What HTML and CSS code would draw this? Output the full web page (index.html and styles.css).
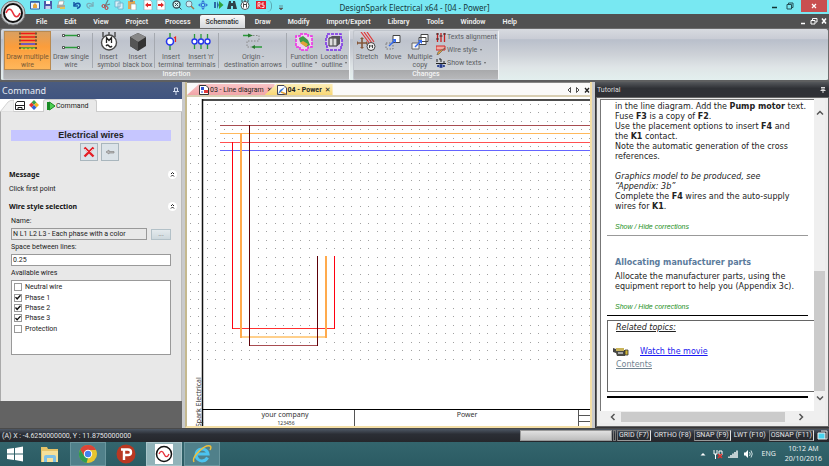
FILE: index.html
```html
<!DOCTYPE html>
<html lang="en">
<head>
<meta charset="utf-8">
<title>DesignSpark Electrical x64 - [04 - Power]</title>
<link rel="stylesheet" href="styles.css">
</head>
<body>
<button class="app-orb" aria-label="Application menu">
  <svg viewBox="0 0 26 26"><circle cx="13" cy="13" r="12" fill="#c9cdd0" stroke="#777" /><circle cx="13" cy="13" r="9" fill="#fff" stroke="#111" stroke-width="2"/><path d="M6 13c2-5 5-5 7 0s5 5 7 0" fill="none" stroke="#e8323c" stroke-width="1.6"/></svg>
</button>

<header class="titlebar">
  <div class="quick">
    <div class="quick-group">
      <button aria-label="Home"><svg viewBox="0 0 10 10"><path d="M.5 1.500h9v7.500h-9z" fill="#e8f2fb" stroke="#2d62a8"/><path d="M1 2h8" stroke="#2d62a8" stroke-width="1.500"/><path d="M3 8V5l2-2 2 2v3z" fill="#e3a53c"/></svg></button>
      <button aria-label="Save"><svg viewBox="0 0 10 10"><path d="M1 1h8v8H1z" fill="#4d57a8"/><path d="M3 1h4v3H3z" fill="#fff"/><path d="M2.500 6h5v3h-5z" fill="#cfd5ee"/></svg></button>
      <button aria-label="Print"><svg viewBox="0 0 10 10"><path d="M3 1h5l-1 4H2z" fill="#fff" stroke="#8a8a8a" stroke-width=".6"/><path d="M1 5h8v3H1z" fill="#a7a7a0"/><path d="M4 7h5v2H4z" fill="#e0c35a"/></svg></button>
    </div>
    <div class="quick-group">
      <button aria-label="Undo"><svg viewBox="0 0 10 10"><path d="M2 2v4h4" fill="none" stroke="#1759a6" stroke-width="1.500"/><path d="M2 6c2-4 7-3 6 0-.4 1.500-1.500 2-3 2.500" fill="none" stroke="#1759a6" stroke-width="1.600"/></svg></button>
      <button aria-label="Redo"><svg viewBox="0 0 10 10"><path d="M8 2v4H4" fill="none" stroke="#79adb8" stroke-width="1.300"/><path d="M8 6C6 2 1 3 2 6c.4 1.500 1.500 2 3 2.500" fill="none" stroke="#79adb8" stroke-width="1.300"/></svg></button>
    </div>
    <div class="quick-group">
      <button aria-label="Cut"><svg viewBox="0 0 10 10"><path d="M7 0L4 6M9 4L3 6" stroke="#6b7d80" stroke-width="1.200"/><circle cx="2.500" cy="6" r="1.500" fill="none" stroke="#c43636"/><circle cx="5.500" cy="8" r="1.500" fill="none" stroke="#c43636"/></svg></button>
      <button aria-label="Copy"><svg viewBox="0 0 10 10"><path d="M1 1h5v6H1zM4 3h5v6H4z" fill="#d9f1f8" stroke="#6ba9c6" stroke-width=".8"/></svg></button>
      <button aria-label="Paste"><svg viewBox="0 0 10 10"><path d="M1 1h7v8H1z" fill="#e5a74f"/><path d="M3 0h3v2H3z" fill="#7b7b7b"/><path d="M4 4h5v6H4z" fill="#fff" stroke="#999" stroke-width=".6"/></svg></button>
    </div>
    <div class="quick-group">
      <button aria-label="Previous page"><svg viewBox="0 0 10 10"><path d="M1 0h6l2 2v8H1z" fill="#fff" stroke="#8b97a1" stroke-width=".6"/><path d="M2 5l3-2.500v1.500h3v2H5v1.500z" fill="#e02828"/></svg></button>
      <button aria-label="Next page"><svg viewBox="0 0 10 10"><path d="M1 0h6l2 2v8H1z" fill="#fff" stroke="#8b97a1" stroke-width=".6"/><path d="M8 5L5 2.500v1.500H2v2h3v1.500z" fill="#e02828"/></svg></button>
    </div>
    <div class="quick-group">
      <button aria-label="Zoom all"><svg viewBox="0 0 10 10"><circle cx="4.500" cy="4.500" r="3.500" fill="#d9f4f5" stroke="#354b55" stroke-width="1.300"/><path d="M7 7l2.500 2.500M3 3l3 3M6 3L3 6" stroke="#354b55"/></svg></button>
      <button aria-label="Zoom"><svg viewBox="0 0 10 10"><circle cx="4" cy="4" r="3" fill="#cfeef5" stroke="#698393"/><path d="M6 6l3 3" stroke="#a4744c" stroke-width="1.500"/></svg></button>
      <button aria-label="Pan"><svg viewBox="0 0 10 10"><path d="M5 0l2 2.500H3zM5 10l2-2.500H3zM0 5l2.500-2v4zM10 5L7.500 3v4z" fill="#3576d6"/><path d="M3.500 3.500h3v3h-3z" fill="none" stroke="#3576d6"/></svg></button>
    </div>
    <div class="quick-group">
      <button aria-label="Run"><svg viewBox="0 0 10 10"><path d="M0 2h2v6H0z" fill="#2c6ca6"/><path d="M3 1l2 4-2 4z" fill="#2c6ca6"/><path d="M5 1l4.500 4L5 9z" fill="#2fa33a"/></svg></button>
      <button aria-label="Find"><svg viewBox="0 0 10 10"><path d="M2 1h2v2h2V1h2l2 8H6V6H4v3H0z" fill="#2e4248"/></svg></button>
      <button aria-label="Symbols"><svg viewBox="0 0 10 10"><circle cx="5" cy="5.500" r="4" fill="#fff" stroke="#4b5559"/><path d="M2 0v2M5 0v2M8 0v2M3.500 7.500v-4L5 5l1.500-1.500v4" fill="none" stroke="#333" stroke-width=".9"/></svg></button>
    </div>
    <div class="quick-group">
      <button aria-label="RS Components"><svg viewBox="0 0 10 10"><path d="M0 1h10v8H0z" fill="#e4202c"/><path d="M2 7.500v-5h2v2.500H2.500L4.500 7.500M8 3H6v2h2v2.500H5.500" fill="none" stroke="#fff" stroke-width=".8"/></svg></button>
    </div>
    <span class="quick-end"></span>
    <button class="quick-more" aria-label="Customize toolbar"><svg viewBox="0 0 6 6"><path d="M1 1h4M1 3h4L3 5z" fill="#555" stroke="#555" stroke-width=".6"/></svg></button>
  </div>
  <h1>DesignSpark Electrical x64 - [04 - Power]</h1>
  <div class="window-controls">
    <button aria-label="Minimize"><svg viewBox="0 0 8 8"><path d="M1 5.500h5" stroke="#133" stroke-width="1.500"/></svg></button>
    <button aria-label="Restore"><svg viewBox="0 0 8 8"><path d="M1 2.500h4.500V7H1zM2.500 2.500V1H7v4.500H5.500" fill="none" stroke="#244f56"/></svg></button>
    <button class="close" aria-label="Close"><svg viewBox="0 0 8 8"><path d="M2 2l4 4M6 2L2 6" stroke="#fff" stroke-width="1.200"/></svg></button>
  </div>
</header>

<nav class="menubar">
  <a href="#">File</a><a href="#">Edit</a><a href="#">View</a><a href="#">Project</a><a href="#">Process</a><a href="#" class="current">Schematic</a><a href="#">Draw</a><a href="#">Modify</a><a href="#">Import/Export</a><a href="#">Library</a><a href="#">Tools</a><a href="#">Window</a><a href="#">Help</a>
  <div class="mdi">
    <button aria-label="Minimize drawing"><svg viewBox="0 0 8 8"><path d="M1 6.500h4" stroke="#fff" stroke-width="1.500"/></svg></button>
    <button aria-label="Restore drawing"><svg viewBox="0 0 8 8"><path d="M1 3.500h4V7H1zM2.500 3V1.500H7V5H5.500" fill="none" stroke="#fff"/></svg></button>
    <button aria-label="Close drawing"><svg viewBox="0 0 8 8"><path d="M2 1.500l4 5M6 1.500l-4 5" stroke="#fff" stroke-width="1.500"/></svg></button>
  </div>
</nav>

<section class="ribbon" aria-label="Schematic">
  <div class="group">
    <div class="tools insertion">
      <button class="tool active"><svg viewBox="0 0 20 20"><path d="M3 1.500h15M3 5h15M3 8.500h15" stroke="#f01818" stroke-width="1.400"/><path d="M3 12h15" stroke="#3b3bf0" stroke-width="1.400"/><path d="M3 16h15" stroke="#269b2b" stroke-width="1.400"/><path d="M3 17h15" stroke="#f3e52c" stroke-dasharray="2 2"/><path d="M1 .5h2v2H1zM17 .5h2v2h-2zM1 4h2v2H1zM17 4h2v2h-2zM1 7.500h2v2H1zM17 7.500h2v2h-2zM1 11h2v2H1zM17 11h2v2h-2zM1 15h2v2H1zM17 15h2v2h-2z" fill="#753"/></svg><span>Draw multiple<br>wire</span></button>
      <button class="tool"><svg viewBox="0 0 20 20"><path d="M3 3.500h14M3 15.500h14" stroke="#2a9a3a" stroke-width="1.400"/><path d="M1.500 2.500h2v2h-2zM16.500 2.500h2v2h-2zM1.500 14.500h2v2h-2zM16.500 14.500h2v2h-2z" fill="#fff" stroke="#333" stroke-width=".8"/></svg><span>Draw single<br>wire</span></button>
      <i class="sep"></i>
      <button class="tool"><svg viewBox="0 0 20 20"><path d="M4 0v5M10 0v4M16 0v5" stroke="#333" stroke-width="1.200"/><circle cx="10" cy="10.500" r="7.500" fill="#fff" stroke="#4a4a4a" stroke-width="1.400"/><path d="M7.500 11V5.500L10 8.500l2.500-3V11M7 14q1.500-2 3 0t3 0" fill="none" stroke="#222" stroke-width="1.300"/></svg><span>Insert<br>symbol</span></button>
      <button class="tool"><svg viewBox="0 0 20 20"><path d="M10 1l8 4v9l-8 5-8-5V5z" fill="#333"/><path d="M10 1l8 4-8 5-8-5z" fill="#888"/><path d="M2 5l8 5v9l-8-5z" fill="#555"/></svg><span>Insert<br>black box</span></button>
      <i class="sep"></i>
      <button class="tool"><svg viewBox="0 0 20 20"><path d="M9 1v5M9 13v5" stroke="#2a9a3a" stroke-width="1.400"/><circle cx="9" cy="9.500" r="3.500" fill="#fff" stroke="#2636ee" stroke-width="1.600"/><path d="M13 6l1.500-1v5" fill="none" stroke="#e22" stroke-width="1.200"/></svg><span>Insert<br>terminal</span></button>
      <button class="tool"><svg viewBox="0 0 20 20"><path d="M3.500 2v5M3.500 12v5M10 2v5M10 12v5M16.500 2v5M16.500 12v5" stroke="#2a9a3a" stroke-width="1.300"/><g fill="#fff" stroke="#2636ee" stroke-width="1.400"><circle cx="3.500" cy="9.500" r="2.500"/><circle cx="10" cy="9.500" r="2.500"/><circle cx="16.500" cy="9.500" r="2.500"/></g></svg><span>Insert 'n'<br>terminals</span></button>
      <i class="sep"></i>
      <button class="tool"><svg viewBox="0 0 20 20"><path d="M0 3.500h6M12 15h7" stroke="#2a9a3a" stroke-width="1.300"/><path d="M5 1.500l5 2-5 2zM8 15l4-2v4z" fill="#287a2f"/><path d="M10 3.500h6V9H4v6h4" fill="none" stroke="#888" stroke-dasharray="1.500 1.500"/></svg><span>Origin -<br>destination arrows</span></button>
      <i class="sep"></i>
      <button class="tool"><svg viewBox="0 0 20 20"><path d="M6 2h8v2h4v11h-4v3H6v-3H2V4h4z" fill="#ecd2ee" stroke="#ee28e6" stroke-width="1.500" stroke-dasharray="3 1"/><path d="M5 6l4-2 5 4 2 5-4 2-6-5z" fill="#3d9d47"/><path d="M6 11l3-2 5 3-2 3z" fill="#e2a23a"/></svg><span>Function<br>outline<b></b></span></button>
      <button class="tool"><svg viewBox="0 0 20 20"><path d="M3 2h14v4h1v8h-1v4H3v-4H2V6h1z" fill="#d9cdea" stroke="#7a2ee6" stroke-width="1.500" stroke-dasharray="3 1"/><path d="M5 6h8v8H5z" fill="#ddd" stroke="#333"/><path d="M13 6l3-2v8l-3 2zM5 6l3-2h8l-3 2z" fill="#555"/><path d="M9 6v8" stroke="#555"/></svg><span>Location<br>outline<b></b></span></button>
    </div>
    <h2>Insertion</h2>
  </div>
  <div class="group">
    <div class="tools changes">
      <button class="tool"><svg viewBox="0 0 20 20"><path d="M4 0l9 12M7 0l8 11M10 0l7 10" stroke="#e03838" stroke-width="1.200"/><path d="M5 6v10M0 11h10" stroke="#85583b" stroke-width="1.600"/><path d="M5 5l2 2H3zM5 17l2-2H3zM-1 11l2-2v4zM11 11L9 9v4z" fill="#85583b"/><circle cx="14" cy="14.500" r="4" fill="#eee" stroke="#444"/><path d="M12.500 16v-3l1.500 1.500 1.500-1.500v3" fill="none" stroke="#444"/></svg><span>Stretch</span></button>
      <button class="tool"><svg viewBox="0 0 20 20"><path d="M10 3.500h7v7h-7z" fill="#fff" stroke="#444"/><path d="M3 11h7v6H3z" fill="none" stroke="#777" stroke-dasharray="1.500 1.500"/><path d="M6 14l6-6" stroke="#3268ef" stroke-width="1.500"/><path d="M9 7h4v4z" fill="#3268ef"/></svg><span>Move</span></button>
      <button class="tool"><svg viewBox="0 0 20 20"><path d="M11 2.500h7v7h-7zM9 5.500h7v7H9z" fill="#fff" stroke="#444"/><path d="M2 11h7v6H2z" fill="#f5f5f5" stroke="#666"/><path d="M5 15l6-6" stroke="#3268ef" stroke-width="1.500"/><path d="M8 8h4v4z" fill="#3268ef"/></svg><span>Multiple<br>copy</span></button>
      <div class="stack">
        <button class="row-tool"><svg viewBox="0 0 10 10"><path d="M1.500 1v9M5 1v9M8.500 1v9" stroke="#c72020" stroke-width="1.300"/><path d="M0 2h3M3.500 4h3M7 2h3M0 7h3" stroke="#333"/></svg>Texts alignment</button>
        <button class="row-tool"><svg viewBox="0 0 10 10"><path d="M0 1h9v4H0z" fill="#f0a9a0" stroke="#d12828"/><path d="M9 3L3 9l-2 1 1-3z" fill="#e9a73c" stroke="#555" stroke-width=".6"/></svg>Wire style<b></b></button>
        <button class="row-tool"><svg viewBox="0 0 10 10"><path d="M1 1v3M3 1h2v3M7 4h2M0 5.500h10" fill="none" stroke="#222"/><path d="M1 8q4-3 8 0-4 3-8 0z" fill="#fff" stroke="#223a8c"/><circle cx="5" cy="8" r="1.300" fill="#223a8c"/></svg>Show texts<b></b></button>
      </div>
    </div>
    <h2>Changes</h2>
  </div>
</section>

<main class="workspace">
  <aside class="command">
    <header class="command-head"><h2>Command</h2><button aria-label="Pin panel"><svg viewBox="0 0 8 8"><path d="M2.500 1h3v3.500h-3zM1 4.500h6M4 4.500V8" fill="none" stroke="#d5def0"/></svg></button></header>
    <div class="command-tabs">
      <svg class="slant" viewBox="0 0 14 13"><path d="M0 13L8 3q2-2 6-2v12z" fill="#f1f1f1" stroke="#bbb" stroke-width=".6"/></svg>
      <button aria-label="Files"><svg viewBox="0 0 10 10"><path d="M.5 9.500v-6L2 1.500h7.500v8zM.5 5.500h9M3 9.500v-2h4v2" fill="#fff" stroke="#222"/></svg></button>
      <button aria-label="Components"><svg viewBox="0 0 10 10"><path d="M5 0l2.500 2.500L5 5 2.500 2.500z" fill="#3ba046"/><path d="M2.500 2.500L5 5 2.500 7.500 0 5z" fill="#e3342c"/><path d="M7.500 2.500L10 5 7.500 7.500 5 5z" fill="#f2b822"/><path d="M5 5l2.500 2.500L5 10 2.500 7.500z" fill="#2f62d8"/></svg></button>
      <button class="selected"><svg viewBox="0 0 10 10"><path d="M1 1h2v8H1z" fill="#178a24"/><path d="M3.500 1L9 5 3.500 9z" fill="#4fd052" stroke="#178a24"/></svg>Command</button>
    </div>
    <form class="command-body">
      <h3 class="banner">Electrical wires</h3>
      <div class="actions">
        <button type="button" aria-label="Cancel"><svg viewBox="0 0 12 12"><path d="M1.500 1.500l9 9M10.500 1.500l-9 9" stroke="#e41e25" stroke-width="2.400"/><path d="M2 3l3 3M10 3L7 6" stroke="#fff" stroke-width=".7"/></svg></button>
        <button type="button" aria-label="Back"><svg viewBox="0 0 12 12"><path d="M2 6l3-2v1.500h5v1.500H5V8z" fill="#bbb" stroke="#888" stroke-width=".7"/></svg></button>
      </div>
      <div class="section"><h4>Message</h4><button type="button" aria-label="Collapse message"><svg viewBox="0 0 9 9"><circle cx="4.500" cy="4.500" r="4.500" fill="#fff"/><path d="M3 4l1.500-1.500L6 4M3 6.500L4.500 5 6 6.500" fill="none" stroke="#222"/></svg></button></div>
      <p class="message">Click first point</p>
      <div class="section"><h4>Wire style selection</h4><button type="button" aria-label="Collapse wire style"><svg viewBox="0 0 9 9"><circle cx="4.500" cy="4.500" r="4.500" fill="#fff"/><path d="M3 4l1.500-1.500L6 4M3 6.500L4.500 5 6 6.500" fill="none" stroke="#222"/></svg></button></div>
      <div class="fields">
        <label for="style-name">Name:</label>
        <div class="picker"><input id="style-name" type="text" value="N L1 L2 L3 - Each phase with a color" readonly><button type="button" aria-label="Browse styles">...</button></div>
        <label for="spacing">Space between lines:</label>
        <input id="spacing" type="text" value="0.25">
        <p id="wires">Available wires</p>
        <div class="wirebox">
          <div class="wires" role="group" aria-labelledby="wires">
            <label><input type="checkbox">Neutral wire</label>
            <label><input type="checkbox" checked>Phase 1</label>
            <label><input type="checkbox" checked>Phase 2</label>
            <label><input type="checkbox" checked>Phase 3</label>
            <label><input type="checkbox">Protection</label>
          </div>
        </div>
      </div>
    </form>
  </aside>

  <section class="document">
    <div class="doc-tabs">
      <button class="doc-tab pink"><svg viewBox="0 0 10 10"><path d="M.5.5H7L9.500 3v6.500h-9z" fill="#fff" stroke="#333"/><path d="M2 2h3v3H2z" fill="#2c4fd0"/><path d="M5 5h4v3H5z" fill="#e23a3a"/><path d="M2 7h2" stroke="#2c4fd0"/></svg>03 - Line diagram<span class="x">✕</span></button>
      <button class="doc-tab yellow"><svg viewBox="0 0 10 10"><path d="M.5.5H7L9.500 3v6.500h-9z" fill="#fff" stroke="#445"/><path d="M1 9l2-4 5-3-4 5z" fill="#3c78d0"/><path d="M4 7l5 2" stroke="#e2a13a" stroke-width="1.500"/></svg>04 - Power<span class="x">✕</span></button>
      <div class="doc-nav">
        <button aria-label="Previous tab"><svg viewBox="0 0 6 8"><path d="M4.500 1.500v5L2 4z" fill="none" stroke="#222" stroke-width=".8"/></svg></button>
        <button aria-label="Next tab"><svg viewBox="0 0 6 8"><path d="M1.500 1.500v5L4 4z" fill="none" stroke="#222" stroke-width=".8"/></svg></button>
        <button aria-label="Close tab"><svg viewBox="0 0 6 8"><path d="M1 2l4 4.500M5 2L1 6.500" stroke="#222" stroke-width="1.300"/></svg></button>
      </div>
    </div>
    <svg class="sheet" aria-label="Power schematic">
      <defs><pattern id="grid" x="3" y="7" width="17" height="17" patternUnits="userSpaceOnUse"><path d="M0 0h1v1H0zM8 0h1v1H8zM0 8h1v1H0zM8 8h1v1H8z" fill="#a0a0a0"/></pattern></defs>
      <rect x="0" y="4" width="100%" height="259" fill="url(#grid)"/>
      <path d="M2000 3H16" fill="none" stroke="#111" stroke-width="1.500"/>
      <path d="M15.500 2V332" stroke="#111" stroke-width="1.500"/>
      <g stroke-width="1">
        <path d="M33 28.500H2000" stroke="#a84c50"/>
        <path d="M33 36.500H2000" stroke="#ffb95c"/>
        <path d="M33 45.500H2000" stroke="#ff5050"/>
        <path d="M33 53.500H2000" stroke="#6464ff"/>
        <path d="M45 231.500H148" stroke="#ff3030"/>
        <path d="M54 240H139" stroke="#ffd08c" stroke-width="2"/>
        <path d="M62 248.500H131" stroke="#a84c50"/>
        <path d="M45.500 45V232M147.500 159V232" stroke="#ff0010"/>
        <path d="M54 36V241M139 159V241" stroke="#ffaa4c" stroke-width="2"/>
        <path d="M62.500 28V249M130.500 159V249" stroke="#5c0008"/>
      </g>
      <path d="M15 312.500H2000" stroke="#000"/>
      <path d="M167.500 313V332M391.500 313V332M391.500 318.500H2000M391.500 324.500H2000" stroke="#555"/>
      <g class="sheet-text">
        <text x="98" y="320" text-anchor="middle">your company</text>
        <text class="tiny" x="99" y="328" text-anchor="middle">123456</text>
        <text x="280" y="320" text-anchor="middle">Power</text>
        <text transform="translate(14 330) rotate(-90)">Spark Electrical</text>
      </g>
    </svg>
  </section>

  <aside class="tutorial">
    <header class="tutorial-head"><h2>Tutorial</h2><button aria-label="Pin tutorial"><svg viewBox="0 0 8 8"><path d="M2 1.500h4M3 2v2h2V2M1.500 4.500h5M4 4.500V7" fill="none" stroke="#ddd"/></svg></button></header>
    <div class="viewer">
      <article class="page">
        <p>in the line diagram. Add the <b>Pump motor</b> text.<br>Fuse <b>F3</b> is a copy of <b>F2</b>.<br>Use the placement options to insert <b>F4</b> and<br>the <b>K1</b> contact.<br>Note the automatic generation of the cross<br>references.</p>
        <p><i>Graphics model to be produced, see<br>“Appendix: 3b”</i><br>Complete the <b>F4</b> wires and the auto-supply<br>wires for <b>K1</b>.</p>
        <a class="corrections" href="#">Show / Hide corrections</a>
        <hr>
        <h3>Allocating manufacturer parts</h3>
        <p>Allocate the manufacturer parts, using the<br>equipment report to help you (Appendix 3c).</p>
        <a class="corrections" href="#">Show / Hide corrections</a>
        <hr class="strong">
        <div class="related">
          <h4>Related topics:</h4>
          <div class="movie"><svg viewBox="0 0 16 10"><path d="M0 1l3 1v4L0 5z" fill="#444"/><path d="M2 3h10v6H4z" fill="#4a4a44"/><path d="M3 1h8v3H3z" fill="#c9b45a"/><path d="M12 3h3v5h-3z" fill="#d2b736" stroke="#333" stroke-width=".8"/><path d="M5 5h5v2H5z" fill="#aaa"/></svg><a href="#">Watch the movie</a></div>
          <a class="contents" href="#">Contents</a>
        </div>
        <hr class="heavy">
      </article>
      <div class="vscroll">
        <svg viewBox="0 0 8 8"><path d="M1 5.500l3-3 3 3" fill="none" stroke="#555" stroke-width="1.500"/></svg>
        <span></span>
        <svg viewBox="0 0 8 8"><path d="M1 2.500l3 3 3-3" fill="none" stroke="#555" stroke-width="1.500"/></svg>
      </div>
      <div class="hscroll">
        <svg viewBox="0 0 8 8"><path d="M5.500 1l-3 3 3 3" fill="none" stroke="#555" stroke-width="1.500"/></svg>
        <span></span>
        <svg viewBox="0 0 8 8"><path d="M2.500 1l3 3-3 3" fill="none" stroke="#555" stroke-width="1.500"/></svg>
      </div>
    </div>
  </aside>
</main>

<footer class="status">
  <span class="coords">(A) X : -4.6250000000, Y : 11.8750000000</span>
  <span class="progress"></span>
  <span class="notch"></span>
  <div class="modes">
    <button class="on">GRID (F7)</button><button>ORTHO (F8)</button><button class="on">SNAP (F9)</button><button>LWT (F10)</button><button class="on">OSNAP (F11)</button>
  </div>
  <svg class="layers" viewBox="0 0 11 11"><path d="M1 3h7v6H1z" fill="#48d3ee" stroke="#eee"/><path d="M4 1h6v8H8" fill="none" stroke="#ddd"/></svg>
</footer>

<nav class="taskbar">
  <button class="task" aria-label="Start"><svg viewBox="0 0 20 20"><path d="M2 5l7-1v5.500H2zM10 4l8-1.500v7h-8zM2 10.500h7V16l-7-1zM10 10.500h8v7L10 16z" fill="#fff"/></svg></button>
  <button class="task" aria-label="File Explorer"><svg viewBox="0 0 20 20"><path d="M1 3h6l1 2h10v13H1z" fill="#e7c468"/><path d="M2 7h16v11H2z" fill="#f6e09a"/><path d="M4 18v-5q0-2 2-2h8q2 0 2 2v5h-3v-4H7v4z" fill="#7ec0e6"/></svg></button>
  <button class="task open" aria-label="Chrome"><svg viewBox="0 0 20 20"><circle cx="10" cy="10" r="9" fill="#e8c52e"/><path d="M2.200 5.500A9 9 0 0 1 18 6h-8l-4 6z" fill="#dc4437"/><path d="M2.200 5.500l4 6.500L10 14l-1.500 5A9 9 0 0 1 2.200 5.500z" fill="#2f9c53"/><circle cx="10" cy="10" r="4.200" fill="#fff"/><circle cx="10" cy="10" r="3.200" fill="#4482ee"/></svg></button>
  <button class="task" aria-label="Presentation"><svg viewBox="0 0 20 20"><circle cx="10" cy="10" r="9.500" fill="#b93822"/><path d="M8 16V5M5 5.500h7q3 0 3 2.700T12 11H8" fill="none" stroke="#fff" stroke-width="2.400"/></svg></button>
  <button class="task focused" aria-label="DesignSpark"><svg viewBox="0 0 20 20"><path d="M1 0h18v20H1z" fill="#fff"/><circle cx="10" cy="10" r="7.500" fill="#fff" stroke="#111" stroke-width="1.500"/><path d="M5 10c1.500-3.500 3.500-3.500 5 0s3.500 3.500 5 0" fill="none" stroke="#e8323c" stroke-width="1.400"/></svg></button>
  <button class="task open" aria-label="Internet Explorer"><svg viewBox="0 0 20 20"><path d="M15.500 13.500A6 6 0 1 1 16 10H5" fill="none" stroke="#4cc3f0" stroke-width="3"/><path d="M2 18C-1 13 13 0 18 2c1.500.6.800 2.500 0 4" fill="none" stroke="#f0c03c" stroke-width="1.400"/></svg></button>
  <div class="tray">
    <svg class="up" viewBox="0 0 10 10"><path d="M2.500 6.500L5 4l2.500 2.500z" fill="#fff"/></svg>
    <svg viewBox="0 0 10 10"><path d="M1 1v4h3V1M2.500 5v5M6 2h3v4H6z" fill="none" stroke="#fff"/><path d="M5 5l4 4M9 5L5 9" stroke="#e2312c" stroke-width="1.600"/></svg>
    <svg viewBox="0 0 10 10"><path d="M1 9V7.500M3 9V6M5 9V4.500M7 9V3M9 9V1.500" stroke="#fff" stroke-width="1.400"/></svg>
    <svg viewBox="0 0 10 10"><path d="M1 3.500h1.500L5 1v8L2.500 6.500H1z" fill="#fff"/><path d="M6.500 3q1.500 2 0 4M8 1.500q2.500 3.500 0 7" fill="none" stroke="#cfe0e2"/></svg>
    <span>ENG</span>
    <time>10:12 AM<br>20/10/2016</time>
  </div>
</nav>
</body>
</html>
```
FILE: styles.css
```css
* { box-sizing: border-box; }
body {
  margin: 0;
  height: 100vh;
  display: grid;
  grid-template-rows: 14px 14px 54px minmax(0, 1fr) 13px 24px;
  overflow: hidden;
  background: #5c5c5c;
  color: #222;
  font: 7px/8px Roboto, "Noto Sans", sans-serif;
}
h1, h2, h3, h4, p { margin: 0; font-size: inherit; font-weight: inherit; }
button { margin: 0; padding: 0; border: 0; background: none; font: inherit; color: inherit; }
svg { display: block; }

.app-orb { position: absolute; left: 0; top: 0; z-index: 2; }
.app-orb svg { width: 26px; height: 26px; }

.titlebar {
  display: grid;
  grid-template-columns: 1fr auto 1fr;
  background: #78e8f2;
}
.titlebar h1 { font: 8px/16px "Noto Sans", sans-serif; color: #16383c; }
.quick { display: flex; gap: 6px; padding-left: 30px; }
.quick-group { display: flex; gap: 3px; align-items: center; height: 10px; }
.quick-group svg { width: 10px; height: 10px; }
.quick-end { width: 5px; height: 12px; border-right: 1px solid #5aa9b2; border-radius: 0 8px 8px 0; margin-left: -5px; }
.quick-more svg { width: 6px; height: 6px; }
.window-controls { display: flex; justify-content: flex-end; align-items: flex-start; gap: 7px; padding-right: 2px; }
.window-controls svg { width: 8px; height: 8px; margin: 2px 0; }
.window-controls .close { background: #c94f50; padding: 0 9px; }

.menubar { display: flex; align-items: stretch; padding-left: 27px; background: #515151; }
.menubar a { padding: 0 8px 0 9px; color: #f0f0f0; font-weight: 600; line-height: 16px; text-decoration: none; }
.menubar a.current { background: linear-gradient(#fafafa, #d5d8dc); color: #333; margin: 1px 1px 0; padding: 0 6px; line-height: 15px; border-radius: 2px 2px 0 0; }
.mdi { display: flex; gap: 2px; align-items: center; margin-left: auto; padding-right: 1px; }
.mdi svg { width: 8px; height: 8px; }

.ribbon {
  display: flex;
  gap: 3px;
  padding: 1px 2px 0;
  background: linear-gradient(#d8dbe0, #c9ccd5 19%, #b9bfcb 21%, #cdd1d7 50%, #dfe5e7 75%, #e3efee);
  border: 1px solid #6c6c6c;
  border-bottom: 2px solid #5e5f60;
  border-radius: 3px;
}
.group { display: flex; flex-direction: column; border: 1px solid #c0c4cb; border-right-color: #f2f4f6; background: linear-gradient(#d4d7dd, #bec3cd 20%, #ccd0d5 70%, #d8dcdf); border-radius: 2px; }
.group h2 { flex: none; height: 9px; line-height: 9px; text-align: center; color: #f4f4f4; font-weight: 500; background: linear-gradient(#a8a9ab, #b7b8ba); }
.tools { flex: 1; display: grid; min-height: 0; color: #5c5e62; }
.insertion { grid-template-columns: 47px 40px 4px 27px 31px 4px 28px 32px 4px 64px 4px 30px 30px; }
.changes { grid-template-columns: 26px 26px 28px 64px; }
.tool { display: flex; flex-direction: column; align-items: center; gap: 1px; padding-top: 1px; white-space: nowrap; min-width: 0; }
.tool svg { width: 20px; height: 20px; flex: none; }
.tool.active { background: linear-gradient(#d7a064, #fb9d3b 40%, #ffb85c); box-shadow: inset 0 0 0 1px #b98a50; color: #7b5a35; }
.tool b, .row-tool b { display: inline-block; margin-left: 2px; border: 1px solid transparent; border-top: 2px solid #666; vertical-align: 2px; }
.sep { border-left: 1px solid #a5a9b0; margin: 2px 1px; }
.stack { display: flex; flex-direction: column; gap: 1px; padding-left: 2px; }
.row-tool { display: flex; align-items: center; gap: 1px; height: 12px; white-space: nowrap; }
.row-tool svg { width: 10px; height: 10px; }

.workspace { display: grid; grid-template-columns: 182px minmax(0, 1fr) 234px; gap: 3px; min-height: 0; background: #c9cacc; border-bottom: 1px solid #4a4a4a; }

.command { display: flex; flex-direction: column; background: #636363; min-height: 0; }
.command-head { display: flex; justify-content: space-between; align-items: center; height: 17px; padding: 1px 2px; background: linear-gradient(#4a5c80, #405480); color: #e5ebf5; }
.command-head h2 { font: 9px/14px "Noto Sans", sans-serif; }
.command-head svg { width: 8px; height: 8px; }
.command-tabs { display: flex; gap: 4px; align-items: center; height: 13px; background: #fff; border-bottom: 1px solid #ccc; }
.command-tabs svg { width: 10px; height: 10px; }
.command-tabs .slant { width: 14px; height: 13px; margin-right: -3px; }
.command-tabs .selected { display: flex; align-items: center; height: 13px; padding: 0 8px 0 2px; background: #e9e9e9; border: 1px solid #ccc; border-bottom: 0; border-radius: 3px 3px 0 0; }
.command-body { padding: 18px 0 46px; background: #e8e8e8; border-left: 1px solid #aaa; border-right: 1px solid #bbb; }
.banner { margin: 0 10px; height: 11px; background: #c6c6ff; font: bold 9px/11px "Liberation Sans", sans-serif; text-align: center; }
.actions { display: flex; justify-content: center; gap: 3px; margin: 2px 0 9px 16px; }
.actions button { padding: 2px; border: 1px solid #a9b6bd; background: #dbe3e8; }
.actions svg { width: 12px; height: 12px; }
.section { display: flex; justify-content: space-between; align-items: center; padding: 0 4px 0 8px; height: 9px; }
.section h4 { font-family: "Noto Sans", sans-serif; font-weight: 700; color: #111; }
.section svg { width: 9px; height: 9px; }
.message { margin: 6px 8px 9px; }
.fields { display: grid; padding: 5px 10px 0; }
.fields > label, .fields > p { height: 11px; margin-bottom: 1px; line-height: 11px; }
.fields input[type="text"] { width: 100%; min-width: 0; height: 12px; margin: 0; padding: 0 1px; border: 1px solid #999; background: #fff; font: inherit; color: #222; }
.fields .picker input { background: #e8e8e8; }
.fields > input[type="text"], .picker { margin-bottom: 2px; }
.picker { display: flex; gap: 4px; align-items: center; }
.picker button { flex: none; width: 20px; height: 11px; border: 1px solid #b3c1c8; background: linear-gradient(#e4eaed, #cdd8dd); line-height: 5px; color: #777; }
.wirebox { height: 75px; padding: 1px 2px; border: 1px solid #999; background: #fff; }
.wires { display: grid; grid-template-rows: repeat(5, 1fr); height: 52px; }
.wires label { display: flex; align-items: center; gap: 3px; }
.wires input { appearance: none; display: grid; place-items: center; width: 8px; height: 8px; margin: 0; border: 1px solid #999; background: #fff; }
.wires input:checked::before { content: ""; width: 6px; height: 6px; background: #111; clip-path: polygon(0 50%, 16% 34%, 36% 54%, 84% 4%, 100% 20%, 36% 90%); }

.document { display: flex; flex-direction: column; min-width: 0; min-height: 0; background: #fff; border: solid #f3dea6; border-width: 0 2px 2px 2px; border-left-color: #c5b98f; }
.doc-tabs { display: flex; height: 15px; padding-top: 1px; background: #fafafa; border-top: 1px solid #888; border-bottom: 2px solid #d9cfb4; }
.doc-tab { display: flex; align-items: center; gap: 1px; height: 11px; padding: 0 2px 0 12px; white-space: nowrap; clip-path: polygon(12px 0, 100% 0, 100% 100%, 0 100%); }
.doc-tab svg { width: 10px; height: 10px; }
.doc-tab .x { margin-left: 2px; font: bold 7px/8px "DejaVu Sans", sans-serif; }
.pink { background: linear-gradient(#f9c4c6, #f1a5a8); }
.yellow { background: linear-gradient(#fdeeb8, #f8d774); font-weight: 700; margin-left: -10px; }
.doc-nav { display: flex; align-items: center; gap: 3px; margin-left: auto; }
.doc-nav svg { width: 6px; height: 8px; }
.sheet { flex: 1; width: 100%; min-height: 0; overflow: hidden; }
.sheet-text { font: 7px "Noto Sans", sans-serif; fill: #333; }
.sheet-text .tiny { font-size: 5px; }

.tutorial { display: flex; flex-direction: column; min-width: 0; min-height: 0; background: #343438; }
.tutorial-head { display: flex; justify-content: space-between; align-items: center; height: 16px; padding: 0 2px; background: linear-gradient(#55585c, #2f3136 40%, #303136); color: #ddd; }
.tutorial-head svg { width: 8px; height: 8px; }
.viewer { flex: 1; min-height: 0; display: grid; grid-template: minmax(0, 1fr) 12px / minmax(0, 1fr) 11px; margin: 0 1px 2px 2px; border: 3px solid #ececec; border-top-width: 1px; outline: 1px solid #666; background: #fff; }
.page { min-height: 0; overflow: hidden; padding: 2px 6px 0 6px; border-left: 1px solid #777; border-top: 1px solid #777; font: 8px/10px "DejaVu Sans", sans-serif; }
.page p, .page h3 { padding-left: 8px; margin-bottom: 10px; white-space: nowrap; }
.page h3 { color: #5b7b9c; font-weight: 700; margin: 22px 0 4px; }
.corrections { display: block; padding-left: 8px; color: #249024; text-decoration: none; font: italic 7px/10px "Liberation Sans", sans-serif; }
.page hr { margin: 3px 0 0; border: 0; height: 1px; background: #999; }
.page hr.strong { background: #000; }
.page hr.heavy { margin-top: 4px; height: 2px; background: #000; }
.related { margin: 4px -6px 0 0; height: 72px; padding: 2px 8px; border: 1px solid #666; border-right: 0; }
.related h4 { font-style: italic; text-decoration: underline; }
.movie { display: flex; align-items: center; gap: 11px; margin: 14px 0 3px -3px; }
.movie svg { width: 16px; height: 10px; }
.movie a { color: #1a1af0; }
.contents { color: #6f8390; }
.vscroll { display: flex; flex-direction: column; align-items: center; background: #efefef; padding: 10px 0 9px; }
.vscroll svg, .hscroll svg { width: 8px; height: 8px; flex: none; }
.vscroll span { width: 100%; margin: auto 0 3px; height: 41%; background: #cbcbcb; }
.hscroll { grid-column: 1 / -1; display: flex; align-items: center; background: #efefef; padding: 0 20px 0 9px; }
.hscroll span { flex: 1; height: 10px; margin: 0 12px 0 4px; background: #cbcbcb; }

.status { display: flex; align-items: center; background: linear-gradient(#4d5764, #2b2e35 40%, #25272c); color: #e4e6e8; white-space: nowrap; }
.coords { margin-left: 2px; }
.progress { width: 92px; height: 11px; margin-left: auto; background: linear-gradient(#e0e0e0, #bdbdbd); border: 1px solid #999; }
.notch { width: 3px; height: 11px; margin: 0 1px; border: 1px solid #777; }
.modes { display: flex; gap: 1px; }
.modes button { height: 11px; padding: 0 1px; line-height: 9px; border: 1px solid transparent; }
.modes .on { border-color: #777 #e0e0e0 #999 #777; }
.layers { width: 11px; height: 11px; margin: 0 1px 0 3px; }

.taskbar { display: flex; align-items: stretch; gap: 2px; padding: 0 7px 0 0; background: linear-gradient(#33656d, #2b5b63); color: #f2f6f6; font-family: "Open Sans", sans-serif; }
.task { width: 36px; display: grid; place-items: center; border: 1px solid transparent; }
.task:first-child { width: 30px; }
.task svg { width: 20px; height: 20px; }
.task.open { background: #50808a; border-color: #6a969e; }
.task.focused { background: #91b3b9; border-color: #a9c5ca; }
.tray { display: flex; align-items: center; gap: 5px; margin-left: auto; }
.tray svg { width: 10px; height: 10px; }
.tray span { margin: 0 4px; }
.tray time { text-align: center; line-height: 10px; }
```
